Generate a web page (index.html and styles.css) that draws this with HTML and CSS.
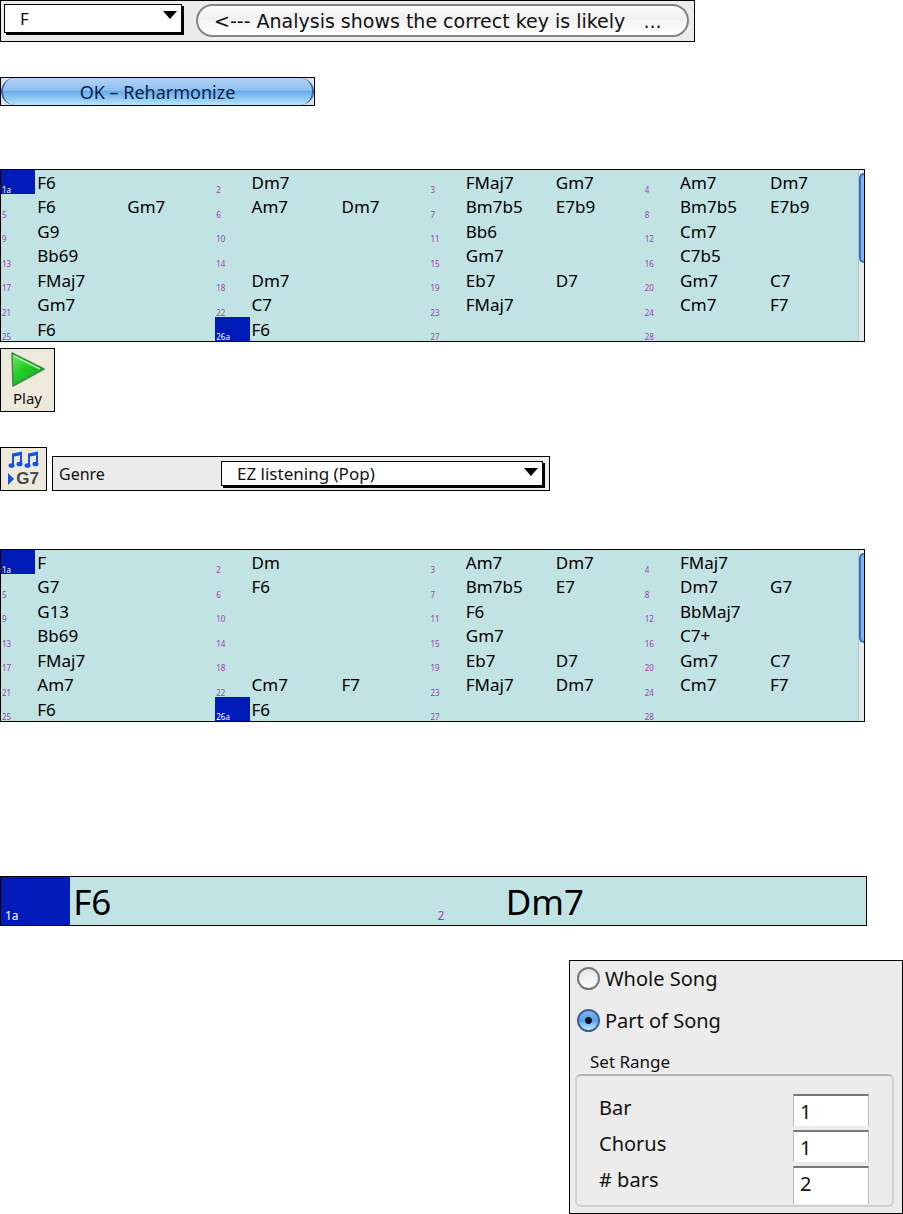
FILE: index.html
```html
<!DOCTYPE html>
<html lang="en">
<head>
<meta charset="UTF-8">
<meta name="viewport" content="width=device-width, initial-scale=1.0">
<title>Reharmonist</title>
<link rel="stylesheet" href="styles.css">
</head>
<body>
    <main>
        <div class="panel key-panel">
            <div class="dropdown key-dropdown">
                <select id="key" aria-label="Key">
                    <option>F</option>
                </select>
                <svg class="arrow" viewBox="0 0 14 8"><path d="M0 0h14L7 8z"/></svg>
            </div>
            <button class="pill">&lt;--- Analysis shows the correct key is likely   ...</button>
        </div>

        <div class="ok-panel">
            <button class="ok">OK – Reharmonize</button>
        </div>

        <div class="sheet">
            <table id="before"></table>
            <div class="scrollbar"><div class="thumb"></div></div>
        </div>

        <button class="tool play">
            <svg viewBox="0 0 34 36">
                <defs>
                    <linearGradient id="green" x1="0" y1="0" x2="1" y2="1">
                        <stop offset="0" stop-color="#7be873"/>
                        <stop offset="0.4" stop-color="#25cf26"/>
                        <stop offset="1" stop-color="#119c1c"/>
                    </linearGradient>
                </defs>
                <path d="M1 1L33 17L2 34z" fill="url(#green)" stroke="#3f8a4a" stroke-width="1.500" stroke-linejoin="round"/>
                <path d="M3 4L29 17" fill="none" stroke="#a5f09c" stroke-width="1.500"/>
            </svg>
            <span>Play</span>
        </button>

        <div class="genre-row">
            <button class="tool melody">
                <svg viewBox="0 0 32 18">
                    <g fill="#1450e6">
                        <path d="M4 2.500L14 .5V4L6 5.500V14H4zM12 3h2v10h-2z"/>
                        <ellipse cx="3.500" cy="14.500" rx="3" ry="2.300"/>
                        <ellipse cx="11.500" cy="13" rx="3" ry="2.300"/>
                        <path d="M20 2.500L30 .5V4l-8 1.500V14h-2zM28 3h2v10h-2z"/>
                        <ellipse cx="19.500" cy="14.500" rx="3" ry="2.300"/>
                        <ellipse cx="27.500" cy="13" rx="3" ry="2.300"/>
                    </g>
                </svg>
                <span class="g7"><svg viewBox="0 0 6 12"><path d="M0 0l6 6-6 6z" fill="#1450e6"/></svg>G7</span>
            </button>
            <div class="panel genre-panel">
                <label for="genre">Genre</label>
                <div class="dropdown genre-dropdown">
                    <select id="genre">
                        <option>EZ listening (Pop)</option>
                    </select>
                    <svg class="arrow" viewBox="0 0 14 8"><path d="M0 0h14L7 8z"/></svg>
                </div>
            </div>
        </div>

        <div class="sheet">
            <table id="after"></table>
            <div class="scrollbar"><div class="thumb"></div></div>
        </div>

        <table class="big-sheet">
            <tr>
                <td><div class="bar"><span class="num section">1a</span><span class="chord">F6</span></div></td>
                <td><div class="bar"><span class="num">2</span><span class="chord">Dm7</span></div></td>
            </tr>
        </table>

        <form class="range">
            <label class="choice"><input type="radio" name="scope">Whole Song</label>
            <label class="choice"><input type="radio" name="scope" checked>Part of Song</label>
            <fieldset>
                <legend>Set Range</legend>
                <div class="fields">
                    <label for="bar">Bar</label>
                    <input type="text" id="bar" value="1">
                    <label for="chorus">Chorus</label>
                    <input type="text" id="chorus" value="1">
                    <label for="bars"># bars</label>
                    <input type="text" id="bars" value="2">
                </div>
            </fieldset>
        </form>
    </main>

    <script src="script.js"></script>
</body>
</html>
```
FILE: styles.css
```css
:root {
    --panel-bg: #ececec;
    --sheet-bg: #c2e3e3;
    --section-bg: #001cb8;
    --num-color: #a03cb0;
}
* {
    box-sizing: border-box;
}
body {
    margin: 0;
    background: white;
    color: #111;
    font-family: "Noto Sans", sans-serif;
    font-size: 16px;
}
main {
    display: flex;
    flex-direction: column;
    align-items: flex-start;
}
button, select, input {
    font: inherit;
    color: inherit;
    margin: 0;
}
svg {
    display: block;
}
.panel {
    display: flex;
    align-items: center;
    background: var(--panel-bg);
    border: 1px solid black;
    width: 100%;
}

/* drop-downs */
.dropdown {
    position: relative;
}
.dropdown select {
    appearance: none;
    display: block;
    width: 100%;
    height: 100%;
    padding: 0 16px 0 15px;
    background: white;
    border: 1px solid black;
    border-radius: 0;
    box-shadow: 2px 2px 0 black;
    font-size: 17px;
}
.arrow {
    position: absolute;
    right: 5px;
    top: 7px;
    width: 14px;
    height: 8px;
}

/* key and analysis */
.key-panel {
    align-items: flex-start;
    max-width: 695px;
    height: 42px;
    padding: 3px 5px 3px 3px;
    gap: 14px;
}
.key-dropdown {
    width: 178px;
    height: 29px;
}
.pill {
    flex: 1;
    height: 33px;
    padding: 0 16px;
    white-space: pre;
    text-align: left;
    font-family: "DejaVu Sans", sans-serif;
    font-size: 19px;
    border: 2px solid #858585;
    border-radius: 17px;
    background: linear-gradient(#fdfdfd, #efefef 45%, #f4f4f4 50%, white);
}
.ok-panel {
    width: 100%;
    max-width: 315px;
    height: 29px;
    margin: 35px 0 63px;
    border: 1px solid black;
    background: #dde4ee;
}
.ok {
    display: block;
    width: 100%;
    height: 27px;
    padding: 0;
    font-size: 18px;
    line-height: 26px;
    color: #0c2148;
    border: 1px solid #3a62a8;
    border-width: 0 2px;
    border-radius: 14px;
    background: linear-gradient(#b4d2f5, #8fc0f1 45%, #69acea 50%, #b5e4fc);
}

/* chord sheets */
.sheet {
    display: flex;
    width: 100%;
    max-width: 865px;
    border: 1px solid black;
    background: var(--sheet-bg);
}
.sheet table {
    width: 100%;
    table-layout: fixed;
    border-collapse: collapse;
    color: black;
    font-size: 17px;
}
td {
    padding: 0;
}
.bar {
    display: flex;
    height: 24px;
}
tr:nth-child(even) .bar {
    height: 25px;
}
.bar .num {
    width: 16%;
    padding-left: 1px;
    display: flex;
    align-items: flex-end;
    flex: none;
    font-size: 8px;
    line-height: 9px;
    color: var(--num-color);
}
.bar .section {
    background: var(--section-bg);
    color: white;
}
.bar .chord {
    width: 42%;
    padding-left: 2px;
    line-height: 26px;
}
.scrollbar {
    flex: none;
    width: 6px;
    padding-top: 3px;
    background: #e6eaec;
    border-left: 1px solid #b9c4c6;
}
.thumb {
    height: 90px;
    border: 2px solid #3c6cc0;
    border-right: 0;
    border-radius: 5px 0 0 5px;
    background: #7db8f4;
}
.big-sheet {
    width: 100%;
    max-width: 867px;
    margin: 154px 0 34px;
    table-layout: fixed;
    border-collapse: separate;
    border-spacing: 0;
    border: 1px solid black;
    background: var(--sheet-bg);
    color: black;
    font-size: 35px;
}
.big-sheet .bar {
    height: 48px;
}
.big-sheet .num {
    padding: 0 0 2px 4px;
    font-size: 12px;
    line-height: 14px;
}
.big-sheet .chord {
    padding-left: 3px;
    line-height: 50px;
}

/* toolbar buttons */
.tool {
    display: flex;
    flex-direction: column;
    align-items: center;
    padding: 0;
    border: 1px solid black;
    background: #ede9db;
}
.play {
    width: 55px;
    height: 64px;
    margin: 6px 0 35px;
    padding-top: 3px;
    font-size: 15px;
    line-height: 20px;
}
.play svg {
    width: 34px;
    height: 36px;
}
.genre-row {
    display: flex;
    align-items: flex-end;
    gap: 5px;
    width: 100%;
    margin-bottom: 58px;
}
.melody {
    width: 47px;
    height: 44px;
    padding-top: 3px;
}
.melody > svg {
    width: 32px;
    height: 18px;
}
.g7 {
    display: flex;
    align-items: center;
    gap: 2px;
    font: bold 17px/20px "Liberation Sans", sans-serif;
    color: #454f52;
}
.g7 svg {
    width: 6px;
    height: 12px;
}
.genre-panel {
    max-width: 498px;
    height: 35px;
    padding: 0 6px;
    justify-content: space-between;
}
.genre-dropdown {
    width: 322px;
    height: 25px;
}

/* range form */
.range {
    align-self: flex-end;
    width: 334px;
    border: 1px solid black;
    background: var(--panel-bg);
    padding: 5px 8px 6px 5px;
    font-size: 20px;
}
.choice {
    display: flex;
    align-items: center;
    gap: 5px;
    height: 24px;
    padding-left: 2px;
    margin-bottom: 18px;
}
.choice input {
    appearance: none;
    width: 23px;
    height: 23px;
    border: 2px solid #777;
    border-radius: 50%;
    background: linear-gradient(#e4e4e4, white);
}
.choice input:checked {
    border-color: #3d5f96;
    background: radial-gradient(circle, #06132e 3px, transparent 4px), linear-gradient(#7fb4ee, #55a2ec 50%, #c2f0ff);
}
fieldset {
    margin: 0;
    padding: 0;
    border: 0;
}
legend {
    padding: 0 15px;
    font-size: 17px;
    line-height: 24px;
}
.fields {
    display: grid;
    grid-template-columns: 1fr 76px;
    row-gap: 4px;
    padding: 18px 23px 1px 22px;
    border: 2px solid #d0d0d0;
    border-top-color: #b4b4b4;
    border-radius: 6px;
}
.fields label {
    line-height: 28px;
}
.fields input {
    width: 100%;
    height: 32px;
    padding: 0 6px;
    border: 1px solid #bbb;
    border-top: 2px solid #777;
    border-bottom: 0;
    border-radius: 0;
    background: white;
}
.fields input:last-child {
    height: 38px;
    padding-bottom: 6px;
}
```
FILE: script.js
```js
// One row per line, four bars per row, up to two chords per bar
const before = [
    ["F6", "Dm7", "FMaj7 Gm7", "Am7 Dm7"],
    ["F6 Gm7", "Am7 Dm7", "Bm7b5 E7b9", "Bm7b5 E7b9"],
    ["G9", "", "Bb6", "Cm7"],
    ["Bb69", "", "Gm7", "C7b5"],
    ["FMaj7", "Dm7", "Eb7 D7", "Gm7 C7"],
    ["Gm7", "C7", "FMaj7", "Cm7 F7"],
    ["F6", "F6", "", ""]
];
const after = [
    ["F", "Dm", "Am7 Dm7", "FMaj7"],
    ["G7", "F6", "Bm7b5 E7", "Dm7 G7"],
    ["G13", "", "F6", "BbMaj7"],
    ["Bb69", "", "Gm7", "C7+"],
    ["FMaj7", "", "Eb7 D7", "Gm7 C7"],
    ["Am7", "Cm7 F7", "FMaj7 Dm7", "Cm7 F7"],
    ["F6", "F6", "", ""]
];
const sections = [1, 26];

function drawSheet(id, rows) {
    let html = "";
    rows.forEach((row, r) => {
        html += "<tr>";
        row.forEach((chords, c) => {
            const bar = r * 4 + c + 1;
            const section = sections.includes(bar);
            html += `<td><div class="bar"><span class="num${section ? " section" : ""}">${bar}${section ? "a" : ""}</span>`;
            chords.split(" ").forEach(chord => {
                html += `<span class="chord">${chord}</span>`;
            });
            html += "</div></td>";
        });
        html += "</tr>";
    });
    document.getElementById(id).innerHTML = html;
}

drawSheet("before", before);
drawSheet("after", after);
```
